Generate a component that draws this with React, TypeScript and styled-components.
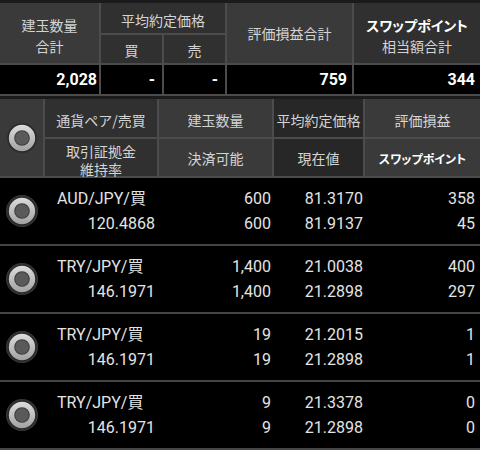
import React from "react";
import styled, { createGlobalStyle } from "styled-components";

const GlobalStyle = createGlobalStyle`
  html, body { margin: 0; padding: 0; background: #1b1b1b; }
  body {
    width: 480px;
    height: 450px;
    overflow: hidden;
    font-family: Roboto, "Noto Sans CJK JP", sans-serif;
  }
`;

const Screen = styled.div`
  width: 480px;
  height: 450px;
  box-sizing: border-box;
  padding-top: 3px;
  background: #1b1b1b;
  display: flex;
  flex-direction: column;
`;

const SummaryGrid = styled.div`
  display: grid;
  grid-template-columns: 99px 61px 61px 125px 126px;
  grid-template-rows: 30px 28px 29px;
  gap: 2px;
  background: #4c4c4c;
  border-bottom: 2px solid #4c4c4c;
`;

const HeadCell = styled.div<{ $tone: "light" | "dark" | "darker"; $rows?: string; $cols?: string; $shift?: number; $lh?: number }>`
  grid-row: ${(p) => p.$rows || "auto"};
  grid-column: ${(p) => p.$cols || "auto"};
  background: ${(p) => (p.$tone === "light" ? "#3a3a3a" : p.$tone === "dark" ? "#303030" : "#272727")};
  color: #d4d4d4;
  font-family: "Noto Sans CJK JP", sans-serif;
  font-size: 14px;
  line-height: ${(p) => p.$lh || 21}px;
  display: flex;
  flex-direction: column;
  align-items: center;
  justify-content: center;
  text-align: center;
  padding-top: ${(p) => p.$shift || 0}px;
  box-sizing: border-box;
  white-space: pre-line;
`;

const SwapLabel = styled.span<{ $size: number }>`
  font-weight: 700;
  color: #ffffff;
  font-size: ${(p) => p.$size}px;
  font-feature-settings: "palt";
`;

const TotalValue = styled.div<{ $pad: number }>`
  background: #000;
  color: #ffffff;
  font-family: Roboto, sans-serif;
  font-weight: 700;
  font-size: 16px;
  display: flex;
  align-items: center;
  justify-content: flex-end;
  padding-right: ${(p) => p.$pad}px;
`;

const Spacer = styled.div`
  height: 3px;
  flex: none;
`;

const ListHeader = styled.div`
  display: grid;
  grid-template-columns: 43px 112px 113px 89px 115px;
  grid-template-rows: 38px 37px;
  gap: 2px;
  background: #4c4c4c;
  border-bottom: 2px solid #4c4c4c;
`;

const RadioCell = styled.div<{ $header?: boolean }>`
  grid-row: ${(p) => (p.$header ? "1 / span 2" : "auto")};
  background: ${(p) => (p.$header ? "#3a3a3a" : "transparent")};
  display: flex;
  align-items: center;
  justify-content: center;
`;

const PositionRow = styled.div`
  display: grid;
  grid-template-columns: 43px 112px 113px 89px 115px;
  column-gap: 2px;
  height: 68px;
  box-sizing: border-box;
  padding-top: 8px;
  background: #000;
  border-bottom: 2px solid #464646;
  color: #e4e4e4;
  font-family: Roboto, "Noto Sans CJK JP", sans-serif;
  font-size: 16px;
  line-height: 25px;
`;

const RowRadio = styled.div`
  display: flex;
  align-items: center;
  justify-content: center;
  margin-top: -8px;
`;

const ValueCol = styled.div<{ $pad: number }>`
  display: flex;
  flex-direction: column;
  align-items: flex-end;
  padding-right: ${(p) => p.$pad}px;
`;

const PairCol = styled.div`
  display: flex;
  flex-direction: column;
`;

const PairName = styled.div`
  padding-left: 12px;
  white-space: nowrap;
`;

const Margin = styled.div`
  text-align: right;
  padding-right: 2px;
`;

const Radio: React.FC = () => (
  <svg width="32" height="32" viewBox="0 0 32 32">
    <defs>
      <linearGradient id="ringGrad" x1="0" y1="0" x2="0" y2="1">
        <stop offset="0" stopColor="#dcdcdc" />
        <stop offset="1" stopColor="#a2a2a2" />
      </linearGradient>
      <radialGradient id="haloGrad" cx="0.5" cy="0.5" r="0.5">
        <stop offset="0.8" stopColor="#1e1e1e" />
        <stop offset="1" stopColor="#3c3c3c" />
      </radialGradient>
    </defs>
    <circle cx="16" cy="16" r="16" fill="url(#haloGrad)" />
    <circle cx="16" cy="16" r="13.2" fill="url(#ringGrad)" />
    <circle cx="16" cy="16" r="7.8" fill="#3c3c3c" />
    <circle cx="16" cy="16" r="6.8" fill="#5a5a5a" />
  </svg>
);

type Position = {
  pair: string;
  margin: string;
  qty: string;
  closable: string;
  avg: string;
  now: string;
  pl: string;
  swap: string;
};

const positions: Position[] = [
  { pair: "AUD/JPY/買", margin: "120.4868", qty: "600", closable: "600", avg: "81.3170", now: "81.9137", pl: "358", swap: "45" },
  { pair: "TRY/JPY/買", margin: "146.1971", qty: "1,400", closable: "1,400", avg: "21.0038", now: "21.2898", pl: "400", swap: "297" },
  { pair: "TRY/JPY/買", margin: "146.1971", qty: "19", closable: "19", avg: "21.2015", now: "21.2898", pl: "1", swap: "1" },
  { pair: "TRY/JPY/買", margin: "146.1971", qty: "9", closable: "9", avg: "21.3378", now: "21.2898", pl: "0", swap: "0" },
];

export default function App() {
  return (
    <>
      <GlobalStyle />
      <Screen>
        <SummaryGrid>
          <HeadCell $tone="light" $rows="1 / span 2" $shift={5}>
            {"建玉数量\n合計"}
          </HeadCell>
          <HeadCell $tone="dark" $cols="2 / span 2" $shift={5}>
            平均約定価格
          </HeadCell>
          <HeadCell $tone="light" $rows="1 / span 2">
            評価損益合計
          </HeadCell>
          <HeadCell $tone="dark" $rows="1 / span 2" $shift={5}>
            <SwapLabel $size={14}>スワップポイント</SwapLabel>
            <span>相当額合計</span>
          </HeadCell>
          <HeadCell $tone="dark" $rows="2" $cols="2" $shift={2}>
            買
          </HeadCell>
          <HeadCell $tone="dark" $rows="2" $cols="3" $shift={2}>
            売
          </HeadCell>
          <TotalValue $pad={2}>2,028</TotalValue>
          <TotalValue $pad={7}>-</TotalValue>
          <TotalValue $pad={7}>-</TotalValue>
          <TotalValue $pad={5}>759</TotalValue>
          <TotalValue $pad={5}>344</TotalValue>
        </SummaryGrid>
        <Spacer />
        <ListHeader>
          <RadioCell $header>
            <Radio />
          </RadioCell>
          <HeadCell $tone="dark" $shift={4}>通貨ペア/売買</HeadCell>
          <HeadCell $tone="light" $shift={4}>建玉数量</HeadCell>
          <HeadCell $tone="darker" $shift={4}>平均約定価格</HeadCell>
          <HeadCell $tone="light" $shift={4}>評価損益</HeadCell>
          <HeadCell $tone="dark" $lh={18} $shift={4}>
            {"取引証拠金\n維持率"}
          </HeadCell>
          <HeadCell $tone="light" $shift={2}>決済可能</HeadCell>
          <HeadCell $tone="darker" $shift={2}>現在値</HeadCell>
          <HeadCell $tone="light" $shift={2}>
            <SwapLabel $size={12}>スワップポイント</SwapLabel>
          </HeadCell>
        </ListHeader>
        {positions.map((p, i) => (
          <PositionRow key={i}>
            <RowRadio>
              <Radio />
            </RowRadio>
            <PairCol>
              <PairName>{p.pair}</PairName>
              <Margin>{p.margin}</Margin>
            </PairCol>
            <ValueCol $pad={1}>
              <span>{p.qty}</span>
              <span>{p.closable}</span>
            </ValueCol>
            <ValueCol $pad={0}>
              <span>{p.avg}</span>
              <span>{p.now}</span>
            </ValueCol>
            <ValueCol $pad={5}>
              <span>{p.pl}</span>
              <span>{p.swap}</span>
            </ValueCol>
          </PositionRow>
        ))}
      </Screen>
    </>
  );
}
